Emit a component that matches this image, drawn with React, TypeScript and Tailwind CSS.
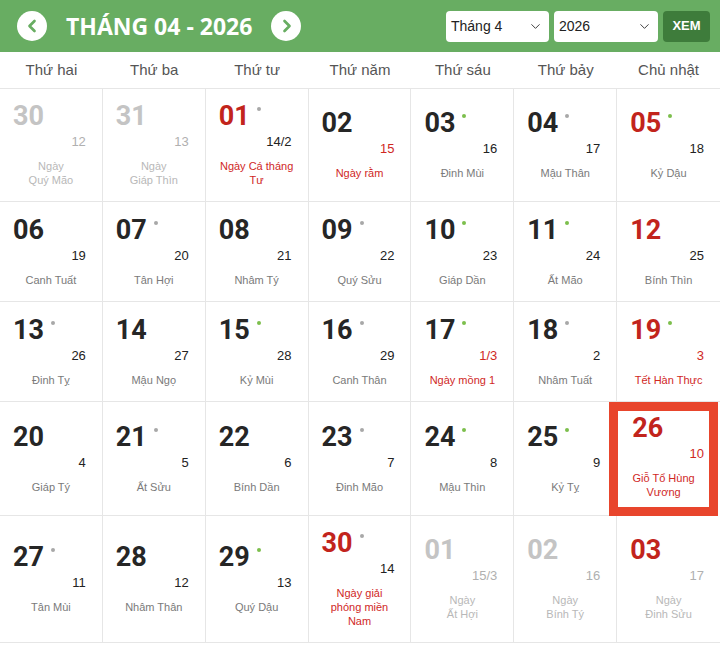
import React from 'react';
import { ChevronLeft, ChevronRight, ChevronDown } from 'lucide-react';

type Day = {
  d: string;
  l: string;
  desc: string[];
  faded?: boolean;
  red?: boolean;
  lunarRed?: boolean;
  descRed?: boolean;
  dot?: 'gray' | 'green';
  today?: boolean;
};

const weekDays = ['Thứ hai', 'Thứ ba', 'Thứ tư', 'Thứ năm', 'Thứ sáu', 'Thứ bảy', 'Chủ nhật'];

const days: Day[] = [
  { d: '30', l: '12', desc: ['Ngày', 'Quý Mão'], faded: true },
  { d: '31', l: '13', desc: ['Ngày', 'Giáp Thìn'], faded: true },
  { d: '01', l: '14/2', desc: ['Ngày Cá tháng', 'Tư'], red: true, descRed: true, dot: 'gray' },
  { d: '02', l: '15', desc: ['Ngày rằm'], lunarRed: true, descRed: true },
  { d: '03', l: '16', desc: ['Đinh Mùi'], dot: 'green' },
  { d: '04', l: '17', desc: ['Mậu Thân'], dot: 'gray' },
  { d: '05', l: '18', desc: ['Kỷ Dậu'], red: true, dot: 'green' },

  { d: '06', l: '19', desc: ['Canh Tuất'] },
  { d: '07', l: '20', desc: ['Tân Hợi'], dot: 'gray' },
  { d: '08', l: '21', desc: ['Nhâm Tý'] },
  { d: '09', l: '22', desc: ['Quý Sửu'], dot: 'gray' },
  { d: '10', l: '23', desc: ['Giáp Dần'], dot: 'green' },
  { d: '11', l: '24', desc: ['Ất Mão'], dot: 'green' },
  { d: '12', l: '25', desc: ['Bính Thìn'], red: true },

  { d: '13', l: '26', desc: ['Đinh Tỵ'], dot: 'gray' },
  { d: '14', l: '27', desc: ['Mậu Ngọ'] },
  { d: '15', l: '28', desc: ['Kỷ Mùi'], dot: 'green' },
  { d: '16', l: '29', desc: ['Canh Thân'], dot: 'gray' },
  { d: '17', l: '1/3', desc: ['Ngày mồng 1'], lunarRed: true, descRed: true, dot: 'green' },
  { d: '18', l: '2', desc: ['Nhâm Tuất'], dot: 'gray' },
  { d: '19', l: '3', desc: ['Tết Hàn Thực'], red: true, lunarRed: true, descRed: true, dot: 'green' },

  { d: '20', l: '4', desc: ['Giáp Tý'] },
  { d: '21', l: '5', desc: ['Ất Sửu'], dot: 'gray' },
  { d: '22', l: '6', desc: ['Bính Dần'] },
  { d: '23', l: '7', desc: ['Đinh Mão'], dot: 'gray' },
  { d: '24', l: '8', desc: ['Mậu Thìn'], dot: 'green' },
  { d: '25', l: '9', desc: ['Kỷ Tỵ'], dot: 'green' },
  { d: '26', l: '10', desc: ['Giỗ Tổ Hùng', 'Vương'], red: true, lunarRed: true, descRed: true, today: true },

  { d: '27', l: '11', desc: ['Tân Mùi'], dot: 'gray' },
  { d: '28', l: '12', desc: ['Nhâm Thân'] },
  { d: '29', l: '13', desc: ['Quý Dậu'], dot: 'green' },
  { d: '30', l: '14', desc: ['Ngày giải', 'phóng miền', 'Nam'], red: true, descRed: true, dot: 'gray' },
  { d: '01', l: '15/3', desc: ['Ngày', 'Ất Hợi'], faded: true },
  { d: '02', l: '16', desc: ['Ngày', 'Bính Tý'], faded: true },
  { d: '03', l: '17', desc: ['Ngày', 'Đinh Sửu'], faded: true, red: true },
];

const DayCell = ({ day, last }: { day: Day; last: boolean }) => {
  const numColor = day.red ? 'text-[#c2241c]' : day.faded ? 'text-[#c4c4c4]' : 'text-[#262626]';
  const lunarColor = day.faded ? 'text-[#b0b0b0]' : day.lunarRed ? 'text-[#d0281f]' : 'text-[#222]';
  const descColor = day.faded ? 'text-[#b8b8b8]' : day.descRed ? 'text-[#d0281f]' : 'text-[#7a7a7a]';

  const frame = day.today
    ? '-ml-[8px] mr-[2px] border-[9px] border-[#e8452c] pt-[1px] pb-[8px] bg-white relative'
    : `min-h-[100px] pt-[11px] pb-[14px] border-b border-[#e6e6e6] ${last ? '' : 'border-r'}`;

  return (
    <div className={`flex flex-col justify-center ${frame}`}>
      <div className={`h-[32px] ${day.today ? 'pl-[14px]' : 'pl-[13px]'}`}>
        <span
          className={`relative font-['Roboto',sans-serif] font-bold text-[27px] leading-[32px] ${numColor}`}
        >
          {day.d}
          {day.dot && (
            <span
              className={`absolute -right-[11px] top-[7px] w-[4px] h-[4px] rounded-full ${
                day.dot === 'green' ? 'bg-[#7cbf4c]' : 'bg-[#a8a8a8]'
              }`}
            />
          )}
        </span>
      </div>
      <div
        className={`text-right font-['Liberation_Sans',sans-serif] text-[13px] leading-[20px] ${lunarColor} ${
          day.today ? 'pr-[5px]' : 'pr-[16px]'
        }`}
      >
        {day.l}
      </div>
      <div className={`mt-[7px] text-center font-['Liberation_Sans',sans-serif] text-[11px] leading-[14px] ${descColor}`}>
        {day.desc.map((line, i) => (
          <div key={i}>{line}</div>
        ))}
      </div>
    </div>
  );
};

const Picker = ({ label, width }: { label: string; width: string }) => (
  <div
    className={`${width} h-[31px] bg-white rounded-[4px] flex items-center justify-between pl-[5px] pr-[6px] font-['Liberation_Sans',sans-serif] text-[14px] text-[#222]`}
  >
    <span>{label}</span>
    <ChevronDown size={15} strokeWidth={1.5} className="text-[#333]" />
  </div>
);

export default function App() {
  return (
    <div className="w-full min-h-[648px] bg-white">
      <div className="h-[52px] bg-[#68ad62] flex items-center pl-[17px] pr-[10px]">
        <button className="w-[30px] h-[30px] rounded-full bg-white flex items-center justify-center">
          <ChevronLeft size={20} strokeWidth={3.2} className="text-[#68ad62] -ml-[1px]" />
        </button>
        <h1 className="mx-[19px] font-['Open_Sans',sans-serif] font-bold text-[23px] text-white tracking-[0px] leading-none">
          THÁNG 04 - 2026
        </h1>
        <button className="w-[30px] h-[30px] rounded-full bg-white flex items-center justify-center">
          <ChevronRight size={20} strokeWidth={3.2} className="text-[#68ad62] ml-[1px]" />
        </button>
        <div className="ml-auto flex items-center gap-[5px]">
          <Picker label="Tháng 4" width="w-[103px]" />
          <Picker label="2026" width="w-[104px]" />
          <button className="w-[47px] h-[31px] rounded-[4px] bg-[#3e7c3b] text-white font-['Liberation_Sans',sans-serif] font-bold text-[13px]">
            XEM
          </button>
        </div>
      </div>

      <div className="grid grid-cols-7 h-[37px] border-b border-[#e6e6e6]">
        {weekDays.map((w) => (
          <div
            key={w}
            className="flex items-center justify-center font-['Liberation_Sans',sans-serif] text-[15px] text-[#555]"
          >
            {w}
          </div>
        ))}
      </div>

      <div className="grid grid-cols-7">
        {days.map((day, i) => (
          <DayCell key={i} day={day} last={i % 7 === 6} />
        ))}
      </div>
    </div>
  );
}
